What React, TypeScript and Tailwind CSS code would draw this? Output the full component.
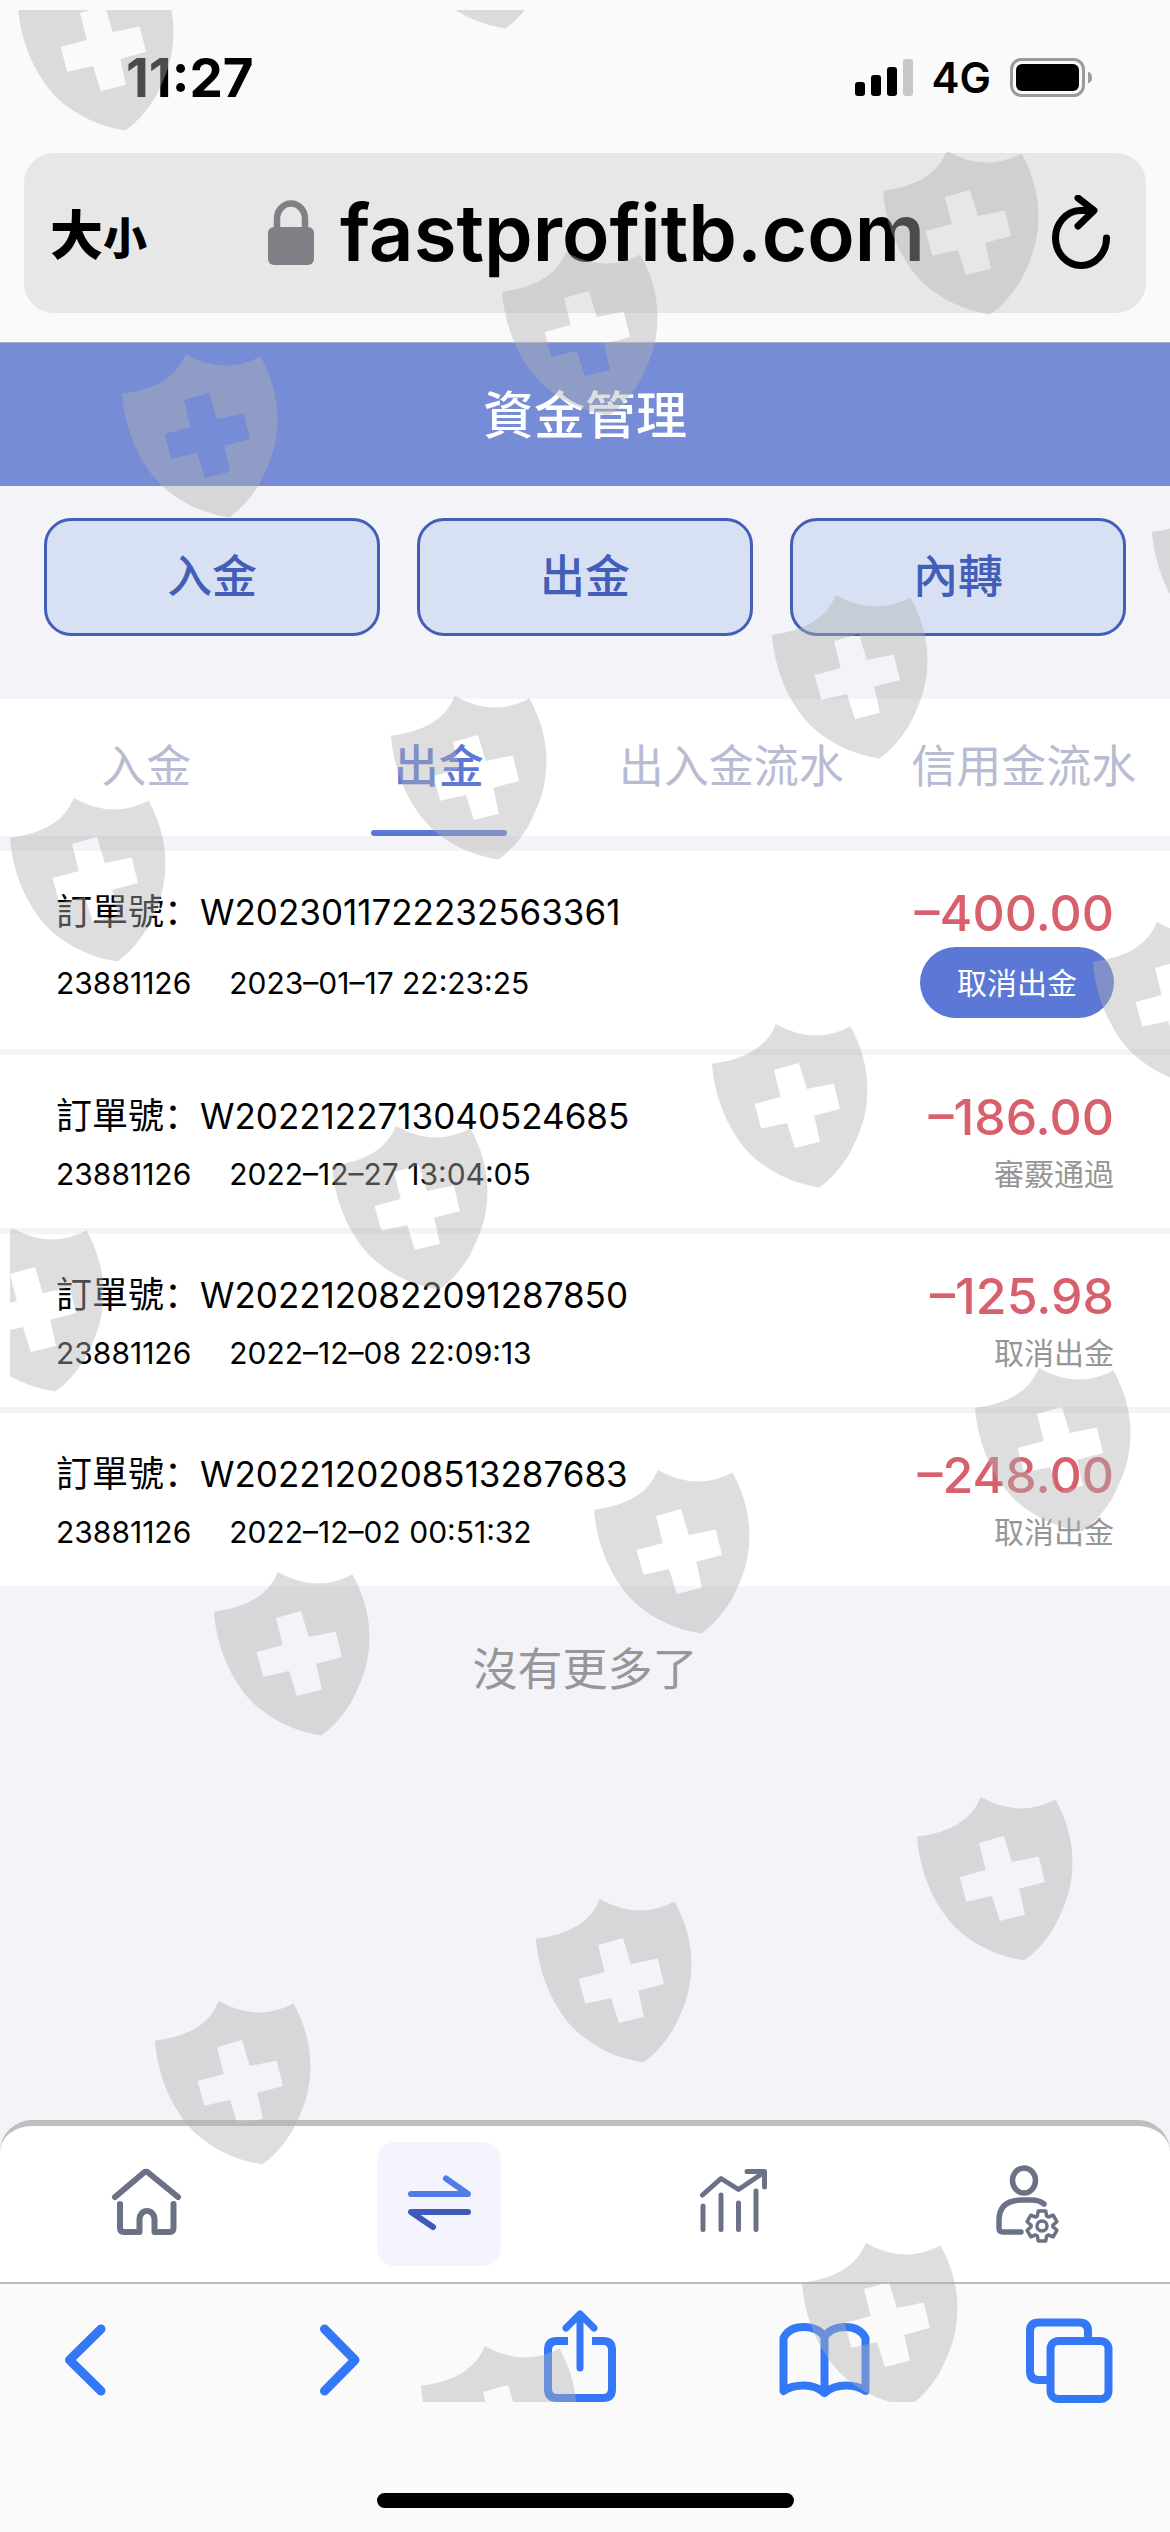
import React from "react";
import clsx from "clsx";

const orders = [
  { id: "W2023011722232563361", account: "23881126", time: "2023–01–17 22:23:25", amount: "–400.00", status: "取消出金", pending: true },
  { id: "W2022122713040524685", account: "23881126", time: "2022–12–27 13:04:05", amount: "–186.00", status: "審覈通過", pending: false },
  { id: "W2022120822091287850", account: "23881126", time: "2022–12–08 22:09:13", amount: "–125.98", status: "取消出金", pending: false },
  { id: "W2022120208513287683", account: "23881126", time: "2022–12–02 00:51:32", amount: "–248.00", status: "取消出金", pending: false },
];

const actions = ["入金", "出金", "內轉"];
const tabs = ["入金", "出金", "出入金流水", "信用金流水"];

// top-left corner of every shield in the overlay pattern
const shields = [
  [18, -33], [398, -135],
  [122, 354], [502, 252], [883, 151],
  [10, 798], [391, 696], [772, 595], [1152, 492],
  [-52, 1228], [332, 1126], [712, 1024], [1093, 922],
  [214, 1572], [594, 1470], [975, 1368],
  [155, 2001], [536, 1899], [917, 1797],
  [421, 2346], [802, 2243],
];

const SHIELD =
  "M0 39.7Q50.9 33.6 63.8 0Q102.4 21.7 138.4 2.4C149.4 21.7 155.4 43.7 155.4 63.7C155.4 91.7 148.4 108.7 137 130.7Q123 153 107.1 163.4C79.4 158.7 58.4 148.7 38.8 130.7C16.4 107.7 2.4 73.7 0 39.7Z" +
  "M62 46L87 39L94.8 65L121.7 59.4L128 85L102.3 91.7L107.9 117.7L82.9 124L75 99L49.3 104.7L42.6 80L68.7 73Z";

const Watermark = () => (
  <div aria-hidden="true" className="pointer-events-none absolute top-[10px] right-0 left-[10px] h-[2392px] overflow-hidden">
    <svg width="1160" height="2392" viewBox="10 10 1160 2392" className="opacity-[0.42]">
      {shields.map(([x, y]) => (
        <path key={`${x}-${y}`} d={SHIELD} transform={`translate(${x} ${y})`} fill="#b2b2b2" fillRule="evenodd" />
      ))}
    </svg>
  </div>
);

const StatusBar = () => (
  <div className="flex h-[153px] items-start justify-between pt-[50px] pr-[78px] pl-[126px]">
    <span className="text-[53px] leading-[56px] font-bold">11:27</span>
    <div className="flex h-[56px] items-center gap-[19px]">
      <svg width="58" height="38" viewBox="0 0 58 38">
        <rect x="0" y="23" width="10" height="14" rx="3" />
        <rect x="16" y="16" width="10" height="21" rx="3" />
        <rect x="32" y="8" width="10" height="29" rx="3" />
        <rect x="48" y="0" width="10" height="37" rx="3" fill="#c8c8c8" />
      </svg>
      <span className="text-[42px] leading-[56px] font-semibold">4G</span>
      <svg width="82" height="40" viewBox="0 0 82 40">
        <rect x="1.5" y="1.5" width="72" height="36" rx="10" fill="none" stroke="#9b9b9b" strokeWidth="3" />
        <rect x="6" y="6" width="63" height="27" rx="6" />
        <path d="M78 13.5q4 1.500 4 6t-4 6z" fill="#9b9b9b" />
      </svg>
    </div>
  </div>
);

const AddressBar = () => (
  <div className="mx-6 flex h-[160px] items-center justify-between rounded-[30px] bg-[#e7e7e7] pr-[34px] pl-[26px]">
    <button className="flex items-baseline pt-2 font-black" title="大小">
      <span className="text-[53px] leading-[60px]">大</span>
      <span className="text-[44px] leading-[60px]">小</span>
    </button>
    <div className="flex items-center gap-[26px]">
      <svg width="46" height="66" viewBox="0 0 46 66">
        <path d="M9 32V19a14 15.500 0 0 1 28 0v13" fill="none" stroke="#808086" strokeWidth="6.500" />
        <rect y="27" width="46" height="38" rx="6" fill="#808086" />
      </svg>
      <span className="text-[78px] leading-[96px] font-semibold">fastprofitb.com</span>
    </div>
    <button title="重新載入">
      <svg width="66" height="76" viewBox="0 0 66 76" fill="none" stroke="#000" strokeWidth="7" strokeLinecap="round" strokeLinejoin="round">
        <path d="M60.500 43A25.500 27.500 0 1 1 34 15.500H47" />
        <path d="M32 3L48 15.500L32 31" />
      </svg>
    </button>
  </div>
);

const OrderCard = ({ order }: { order: (typeof orders)[number] }) => (
  <li className="bg-white px-[56px] pt-9 pb-[23px]">
    <div className="flex h-[52px] items-center justify-between">
      <p className="h-[52px] text-[36px] leading-[50px]">
        訂單號：<span className="text-[35px]">{order.id}</span>
      </p>
      <p className="text-[50px] leading-[52px] font-medium text-[#d8606c]">{order.amount}</p>
    </div>
    <div className="flex min-h-[62px] items-center justify-between">
      <p className="flex gap-[38px] text-[30px] leading-[40px]">
        <span>{order.account}</span>
        <span>{order.time}</span>
      </p>
      {order.pending ? (
        <button className="my-2 h-[71px] rounded-full bg-[#5c78d6] px-[37px] text-[30px] leading-[40px] text-white">
          {order.status}
        </button>
      ) : (
        <span className="text-[30px] leading-[40px] text-[#969696]">{order.status}</span>
      )}
    </div>
  </li>
);

// outline of a six-tooth gear around (60, 64)
const gearPoints = Array.from({ length: 6 }, (_, i) =>
  [[-25, 11], [-14, 15.5], [14, 15.5], [25, 11]].map(([deg, r]) => {
    const a = ((i * 60 + deg - 90) * Math.PI) / 180;
    return `${60 + r * Math.cos(a)},${64 + r * Math.sin(a)}`;
  })
).flat().join(" ");

const navItems = [
  {
    name: "首頁",
    active: false,
    icon: (
      <g strokeWidth="6">
        <path d="M11 35L40 10.500Q42 9 44 10.500L74 35" />
        <path d="M16 42V66Q16 70 20 70H35.500V57A7.500 8 0 0 1 50.500 57V70H65.500Q69.500 70 69.500 66V42" />
      </g>
    ),
  },
  {
    name: "資金管理",
    active: true,
    icon: (
      <g strokeWidth="6">
        <path d="M14 32H71L49 16.500" stroke="#537de6" />
        <path d="M71 50H14L36 65" stroke="#3f5ab9" />
      </g>
    ),
  },
  {
    name: "行情",
    active: false,
    icon: (
      <g strokeWidth="5">
        <path d="M13.500 33L32 16.500L49.500 27.500L74 11" />
        <path d="M58 9.500H75.500V25" />
        <path d="M14 44V67.500M32 33V67.500M49.500 41V67.500M67 29V67.500" />
      </g>
    ),
  },
  {
    name: "我的",
    active: false,
    icon: (
      <g strokeWidth="5.500">
        <ellipse cx="42" cy="18.500" rx="11.500" ry="12.500" />
        <path d="M62 42Q57 38 50 38H38Q17 39 17 58V66Q17 70 21 70H39" />
        <polygon points={gearPoints} strokeWidth="3.500" />
        <circle cx="60" cy="64" r="5" strokeWidth="3.500" />
      </g>
    ),
  },
];

const BottomNav = () => (
  <nav className="grid h-[162px] grid-cols-4 items-center rounded-t-[32px] border-t-[6px] border-[#bfbfbf] bg-white">
    {navItems.map((item) => (
      <button
        key={item.name}
        title={item.name}
        className={clsx("mx-auto flex size-[124px] items-center justify-center rounded-[18px]", item.active && "bg-[#f4f4fe]")}
      >
        <svg width="84" height="84" viewBox="0 0 84 84" fill="none" stroke="#6c7285" strokeLinecap="round" strokeLinejoin="round">
          {item.icon}
        </svg>
      </button>
    ))}
  </nav>
);

const toolbarItems = [
  { name: "返回", icon: <path d="M63 23L31.500 54L63 85" strokeWidth="9" /> },
  { name: "前進", icon: <path d="M40.500 23L71 54L40.500 85" strokeWidth="9" /> },
  {
    name: "分享",
    icon: (
      <>
        <path d="M50 9V62M36 22L50 8L64 22" strokeWidth="7" />
        <path d="M38 35H27Q18 35 18 44V83Q18 92 27 92H73Q82 92 82 83V44Q82 35 73 35H62" strokeLinecap="butt" />
      </>
    ),
  },
  {
    name: "書籤",
    icon: <path d="M8.500 85V32Q14 21 29 21Q43 21 49.500 31Q56 21 70 21Q85 21 90.500 32V85Q83 79.500 71 79.500Q58 79.500 49.500 87Q41 79.500 29 79.500Q16 79.500 8.500 85ZM49.500 31V87" />,
  },
  {
    name: "分頁",
    icon: (
      <>
        <rect x="29.500" y="35" width="58" height="58" rx="8" />
        <path d="M67 34V25Q67 16.500 58 16.500H18Q9 16.500 9 25V65Q9 74 18 74H29" strokeLinecap="butt" />
      </>
    ),
  },
];

const BrowserToolbar = () => (
  <div className="h-[250px] border-t-2 border-[#bcbcbc] bg-[#fafafa]">
    <div className="flex justify-between pt-[22px] pr-[53px] pl-[38px]">
      {toolbarItems.map((item) => (
        <button key={item.name} title={item.name}>
          <svg width="96" height="100" viewBox="0 0 96 100" fill="none" stroke="#3478f6" strokeWidth="8" strokeLinecap="round" strokeLinejoin="round">
            {item.icon}
          </svg>
        </button>
      ))}
    </div>
    <div className="mx-auto mt-[87px] h-[15px] w-[417px] rounded-full bg-black" />
  </div>
);

export default function App() {
  return (
    <div className="relative flex min-h-screen flex-col overflow-hidden bg-[#f3f3f8] font-['Inter','Noto_Sans_CJK_SC',sans-serif] text-black">
      <div className="bg-[#fafafa] pb-[29px]">
        <StatusBar />
        <AddressBar />
      </div>

      <header className="flex h-[144px] items-center justify-center border-t border-[#a9b0cc] bg-[#768cd6] pt-[2px]">
        <h1 className="text-[51px] leading-[60px] font-medium text-white">資金管理</h1>
      </header>

      <div className="grid grid-cols-3 gap-[37px] px-[44px] pt-8 pb-[63px]">
        {actions.map((label) => (
          <button key={label} className="h-[118px] rounded-[27px] border-[3px] border-[#425eb8] bg-[#d8e1f3] text-[45px] leading-[60px] font-medium text-[#425eb8]">
            {label}
          </button>
        ))}
      </div>

      <div role="tablist" className="grid h-[137px] grid-cols-4 bg-white">
        {tabs.map((label) => {
          const active = label === "出金";
          return (
            <button
              key={label}
              role="tab"
              aria-selected={active}
              className={clsx(
                "flex flex-col items-center justify-between pt-[38px] text-[45px] leading-[60px] whitespace-nowrap",
                active ? "font-medium text-[#5c78d6]" : "text-[#b8bcd3]"
              )}
            >
              {label}
              {active && <span className="h-[6px] w-[136px] rounded-full bg-[#5c78d6]" />}
            </button>
          );
        })}
      </div>

      <ul className="mt-[15px] flex flex-col gap-[6px]">
        {orders.map((order) => (
          <OrderCard key={order.id} order={order} />
        ))}
      </ul>
      <p className="mt-[54px] text-center text-[45px] leading-[60px] text-[#969799]">沒有更多了</p>

      <div className="mt-auto">
        <BottomNav />
        <BrowserToolbar />
      </div>

      <Watermark />
    </div>
  );
}
